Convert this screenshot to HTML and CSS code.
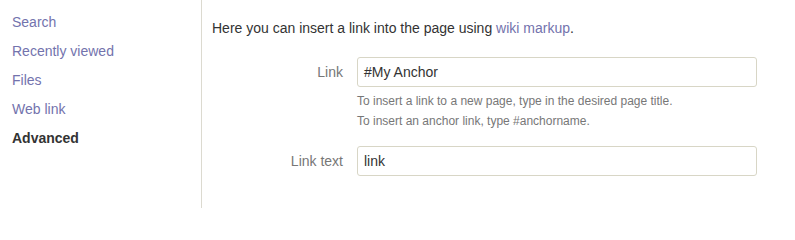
FILE: index.html
```html
<!DOCTYPE html>
<html>
<head>
<meta charset="utf-8">
<link rel="stylesheet" href="styles.css">
</head>
<body>
<div class="dialog">
  <nav class="sidebar">
    <a class="nav-item">Search</a>
    <a class="nav-item">Recently viewed</a>
    <a class="nav-item">Files</a>
    <a class="nav-item">Web link</a>
    <a class="nav-item active">Advanced</a>
  </nav>
  <main class="content">
    <p class="intro">Here you can insert a link into the page using <a class="link">wiki markup</a>.</p>
    <div class="field">
      <label class="label">Link</label>
      <div class="control">
        <div class="input">#My Anchor</div>
        <div class="help">To insert a link to a new page, type in the desired page title.</div>
        <div class="help">To insert an anchor link, type #anchorname.</div>
      </div>
    </div>
    <div class="field second">
      <label class="label">Link text</label>
      <div class="control">
        <div class="input">link</div>
      </div>
    </div>
  </main>
</div>
</body>
</html>
```
FILE: styles.css
```css
html, body {
  margin: 0;
  padding: 0;
  background: #fff;
}
body {
  font-family: "Liberation Sans", Arial, sans-serif;
  font-size: 14px;
  color: #333;
}
.dialog {
  display: flex;
  height: 208px;
}
.sidebar {
  width: 189px;
  padding: 8px 0 0 12px;
  border-right: 1px solid #dcdad0;
  display: flex;
  flex-direction: column;
}
.nav-item {
  display: block;
  height: 29px;
  line-height: 29px;
  color: #7373ad;
  text-decoration: none;
}
.nav-item.active {
  color: #333;
  font-weight: bold;
}
.content {
  flex: 1;
  padding: 18px 0 0 10px;
}
.intro {
  margin: 0;
  line-height: 20px;
}
.link {
  color: #7373ad;
  text-decoration: none;
}
.field {
  display: flex;
  margin-top: 19px;
}
.field.second {
  margin-top: 15px;
}
.label {
  width: 131px;
  text-align: right;
  color: #777;
  line-height: 30px;
  padding-right: 14px;
}
.control {
  width: 400px;
}
.input {
  box-sizing: border-box;
  height: 30px;
  line-height: 28px;
  border: 1px solid #d8d6c6;
  border-radius: 3px;
  padding: 0 6px;
  color: #333;
}
.help {
  font-size: 12px;
  line-height: 20px;
  color: #777;
}
.input + .help {
  margin-top: 4px;
}
```
